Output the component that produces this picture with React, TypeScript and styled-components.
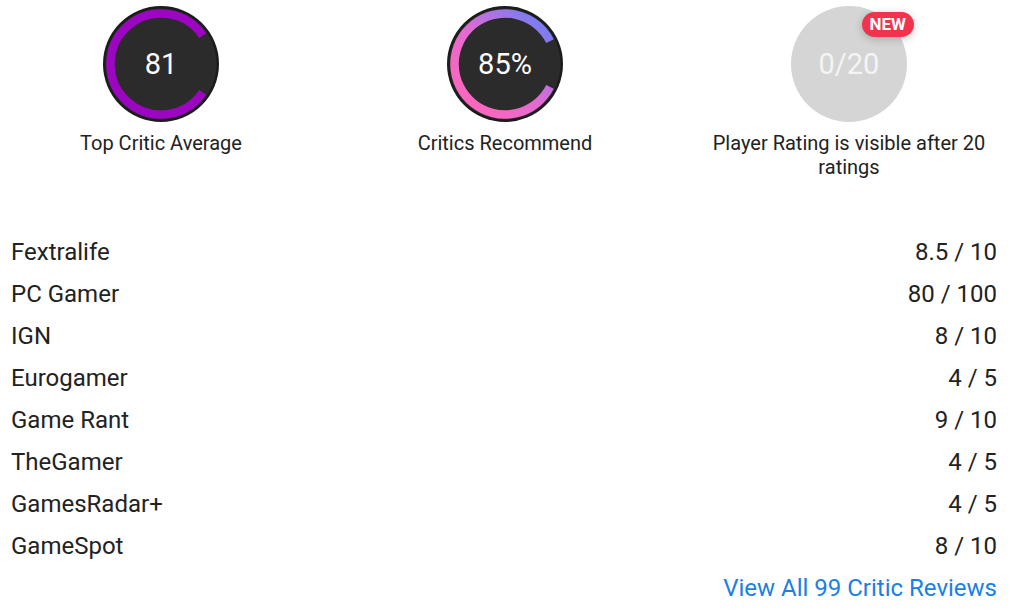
import React from "react";
import styled, { createGlobalStyle } from "styled-components";

interface Review {
  outlet: string;
  score: string;
}

const reviews: Review[] = [
  { outlet: "Fextralife", score: "8.5 / 10" },
  { outlet: "PC Gamer", score: "80 / 100" },
  { outlet: "IGN", score: "8 / 10" },
  { outlet: "Eurogamer", score: "4 / 5" },
  { outlet: "Game Rant", score: "9 / 10" },
  { outlet: "TheGamer", score: "4 / 5" },
  { outlet: "GamesRadar+", score: "4 / 5" },
  { outlet: "GameSpot", score: "8 / 10" },
];

const SIZE = 116;
const CENTER = SIZE / 2;
const RING_R = 50.5;

// arc from angle a0 to a1 (degrees, clockwise from 3 o'clock)
const arcPath = (a0: number, a1: number) => {
  const rad = (a: number) => (a * Math.PI) / 180;
  const x0 = CENTER + RING_R * Math.cos(rad(a0));
  const y0 = CENTER + RING_R * Math.sin(rad(a0));
  const x1 = CENTER + RING_R * Math.cos(rad(a1));
  const y1 = CENTER + RING_R * Math.sin(rad(a1));
  const large = a1 - a0 > 180 ? 1 : 0;
  return `M ${x0} ${y0} A ${RING_R} ${RING_R} 0 ${large} 1 ${x1} ${y1}`;
};

interface DialProps {
  value: string;
  percent: number;
  gradient?: boolean;
}

const Dial: React.FC<DialProps> = ({ value, percent, gradient }) => {
  const gap = (1 - percent) * 360;
  const id = gradient ? "dialGrad" : undefined;
  return (
    <DialBox>
      <svg width={SIZE} height={SIZE} viewBox={`0 0 ${SIZE} ${SIZE}`}>
        {gradient && (
          <defs>
            <linearGradient
              id="dialGrad"
              gradientUnits="userSpaceOnUse"
              x1="14"
              y1="102"
              x2="102"
              y2="14"
            >
              <stop offset="0%" stopColor="#ff66b8" />
              <stop offset="45%" stopColor="#e56ad0" />
              <stop offset="100%" stopColor="#6b7ff6" />
            </linearGradient>
          </defs>
        )}
        <circle cx={CENTER} cy={CENTER} r={58} fill="#1c1c1c" />
        <circle cx={CENTER} cy={CENTER} r={55.5} fill="#2b2b2b" />
        <path
          d={arcPath(gap / 2, 360 - gap / 2)}
          fill="none"
          stroke={id ? `url(#${id})` : "#9c06c2"}
          strokeWidth={8.5}
        />
      </svg>
      <DialValue>{value}</DialValue>
    </DialBox>
  );
};

const App: React.FC = () => {
  return (
    <Page>
      <GlobalStyle />
      <Summary>
        <Stat>
          <Dial value="81" percent={0.81} />
          <StatLabel>Top Critic Average</StatLabel>
        </Stat>
        <Stat>
          <Dial value="85%" percent={0.85} gradient />
          <StatLabel>Critics Recommend</StatLabel>
        </Stat>
        <Stat>
          <DialBox>
            <EmptyDial>0/20</EmptyDial>
            <NewBadge>NEW</NewBadge>
          </DialBox>
          <StatLabel>Player Rating is visible after 20 ratings</StatLabel>
        </Stat>
      </Summary>
      <ReviewList>
        {reviews.map((r) => (
          <ReviewRow key={r.outlet}>
            <span>{r.outlet}</span>
            <span>{r.score}</span>
          </ReviewRow>
        ))}
      </ReviewList>
      <Footer>
        <ViewAll href="#">View All 99 Critic Reviews</ViewAll>
      </Footer>
    </Page>
  );
};

export default App;

// Styled components
const GlobalStyle = createGlobalStyle`
  body {
    margin: 0;
    background: #ffffff;
    font-family: Roboto, "Noto Sans", sans-serif;
    color: #212121;
  }
`;

const Page = styled.div`
  padding: 6px 20px 0 11px;
`;

const Summary = styled.div`
  display: grid;
  grid-template-columns: repeat(3, 300px);
  column-gap: 44px;
`;

const Stat = styled.div`
  display: flex;
  flex-direction: column;
  align-items: center;
`;

const DialBox = styled.div`
  position: relative;
  width: 116px;
  height: 116px;

  svg {
    display: block;
  }
`;

const DialValue = styled.div`
  position: absolute;
  inset: 0;
  display: flex;
  align-items: center;
  justify-content: center;
  color: #ffffff;
  font-size: 29px;
`;

const EmptyDial = styled.div`
  width: 116px;
  height: 116px;
  border-radius: 50%;
  background: #d5d5d5;
  color: #f4f4f4;
  font-size: 29px;
  display: flex;
  align-items: center;
  justify-content: center;
`;

const NewBadge = styled.span`
  position: absolute;
  top: 6px;
  right: -7px;
  height: 25px;
  padding: 0 8px;
  border-radius: 13px;
  background: #f2334d;
  color: #ffffff;
  font-size: 17px;
  font-weight: 700;
  line-height: 25px;
  box-shadow: 0 2px 8px rgba(0, 0, 0, 0.22);
`;

const StatLabel = styled.div`
  margin-top: 9px;
  font-size: 20px;
  line-height: 24px;
  text-align: center;
  color: #222;
`;

const ReviewList = styled.div`
  margin-top: 52px;
  display: flex;
  flex-direction: column;
`;

const ReviewRow = styled.div`
  display: flex;
  justify-content: space-between;
  align-items: center;
  height: 42px;
  font-size: 24px;
  color: #222;
`;

const Footer = styled.div`
  display: flex;
  justify-content: flex-end;
  height: 42px;
  align-items: center;
`;

const ViewAll = styled.a`
  font-size: 24px;
  color: #1a7fe6;
  text-decoration: none;
`;
